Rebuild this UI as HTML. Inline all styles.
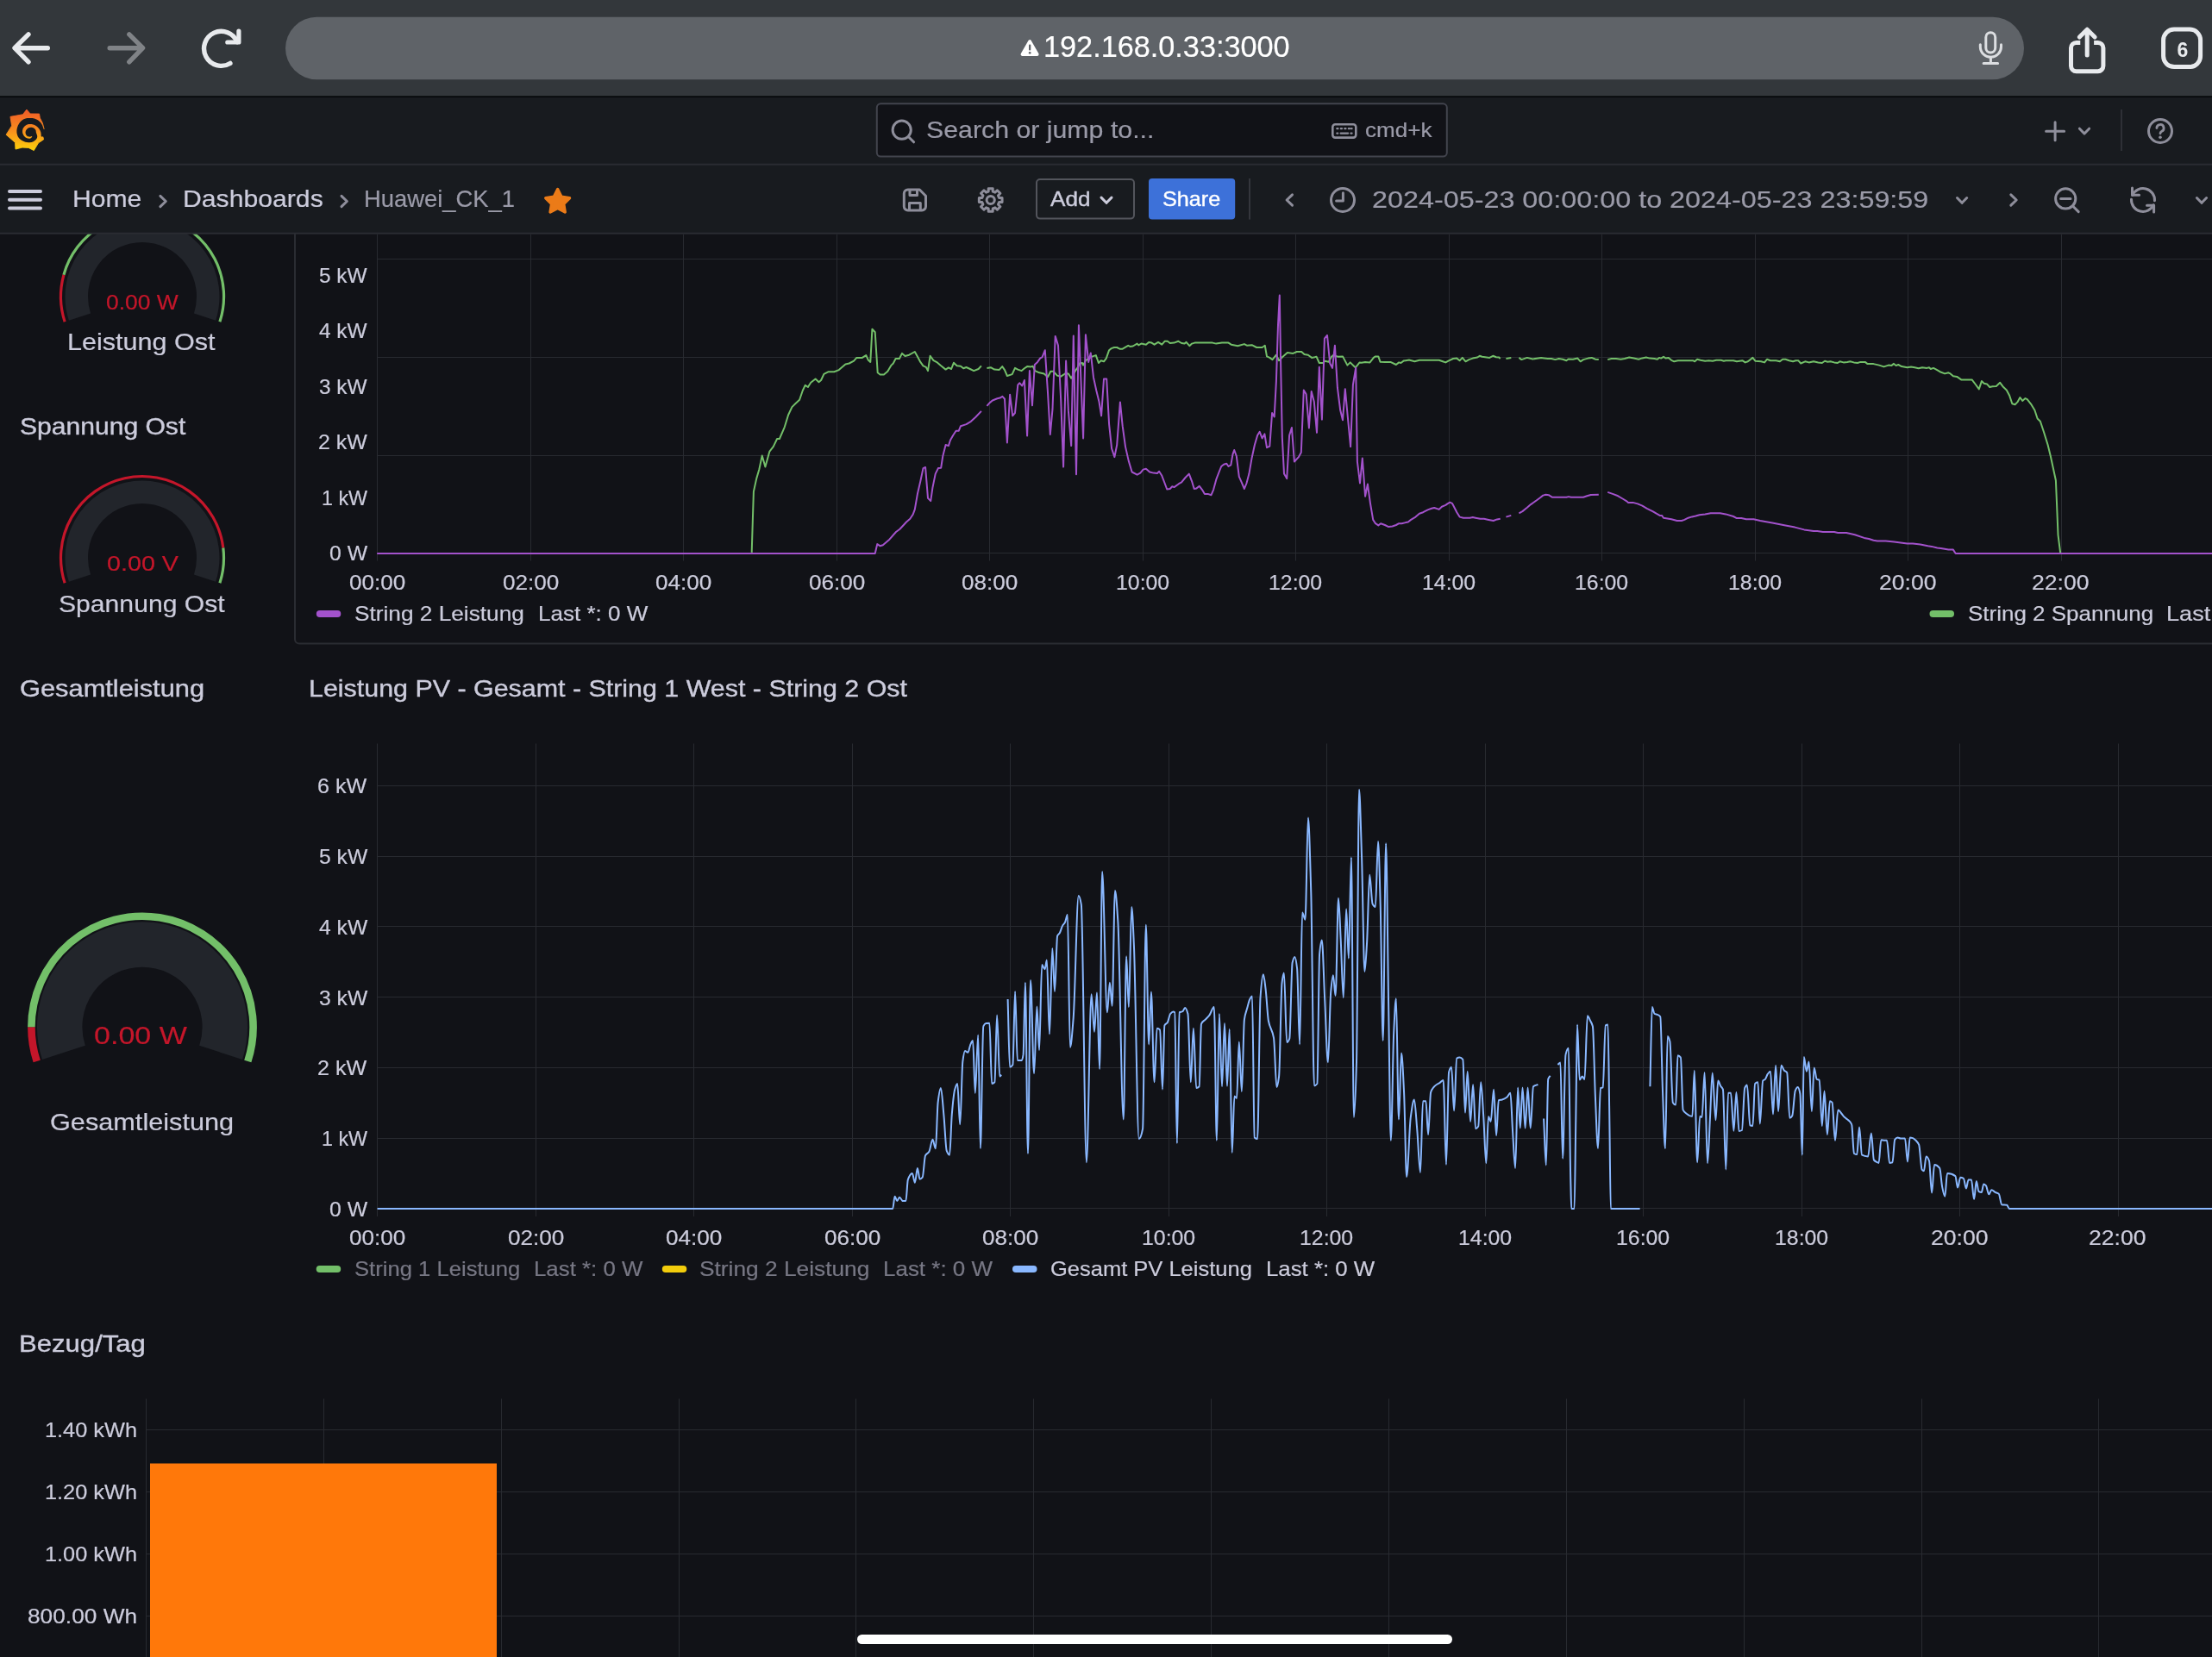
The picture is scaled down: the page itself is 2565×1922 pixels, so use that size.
<!DOCTYPE html>
<html><head><meta charset="utf-8"><title>Huawei_CK_1 - Dashboards - Grafana</title><style>
html,body{margin:0;padding:0;background:#111217;}
html{width:2565px;height:1922px;overflow:hidden;}
body{width:2565px;height:1922px;position:relative;overflow:hidden;font-family:"Liberation Sans", sans-serif;}
.r{position:absolute;}
.t{position:absolute;white-space:pre;line-height:normal;font-family:"Liberation Sans", sans-serif;transform-origin:0 0;}
#tx{position:absolute;left:0;top:0;width:2565px;height:1922px;will-change:transform;overflow:hidden;}
svg{position:absolute;left:0;top:0;overflow:hidden;}
</style></head><body>
<svg width="2565" height="1922" viewBox="0 0 2565 1922"><rect x="342" y="262" width="2240" height="484.5" rx="5" fill="none" stroke="#2a2c32" stroke-width="2"/>
<line x1="437.5" y1="272" x2="437.5" y2="650.5" stroke="#282a30" stroke-width="1"/>
<line x1="615.5" y1="272" x2="615.5" y2="650.5" stroke="#282a30" stroke-width="1"/>
<line x1="792.5" y1="272" x2="792.5" y2="650.5" stroke="#282a30" stroke-width="1"/>
<line x1="970.5" y1="272" x2="970.5" y2="650.5" stroke="#282a30" stroke-width="1"/>
<line x1="1147.5" y1="272" x2="1147.5" y2="650.5" stroke="#282a30" stroke-width="1"/>
<line x1="1325.5" y1="272" x2="1325.5" y2="650.5" stroke="#282a30" stroke-width="1"/>
<line x1="1502.5" y1="272" x2="1502.5" y2="650.5" stroke="#282a30" stroke-width="1"/>
<line x1="1680.5" y1="272" x2="1680.5" y2="650.5" stroke="#282a30" stroke-width="1"/>
<line x1="1857.5" y1="272" x2="1857.5" y2="650.5" stroke="#282a30" stroke-width="1"/>
<line x1="2035.5" y1="272" x2="2035.5" y2="650.5" stroke="#282a30" stroke-width="1"/>
<line x1="2212.5" y1="272" x2="2212.5" y2="650.5" stroke="#282a30" stroke-width="1"/>
<line x1="2390.5" y1="272" x2="2390.5" y2="650.5" stroke="#282a30" stroke-width="1"/>
<line x1="437.5" y1="300.5" x2="2565" y2="300.5" stroke="#282a30" stroke-width="1"/>
<line x1="437.5" y1="414.5" x2="2565" y2="414.5" stroke="#282a30" stroke-width="1"/>
<line x1="437.5" y1="528.5" x2="2565" y2="528.5" stroke="#282a30" stroke-width="1"/>
<line x1="437.5" y1="641.5" x2="2565" y2="641.5" stroke="#282a30" stroke-width="1"/>
<line x1="437.5" y1="862.5" x2="437.5" y2="1411" stroke="#282a30" stroke-width="1"/>
<line x1="621.5" y1="862.5" x2="621.5" y2="1411" stroke="#282a30" stroke-width="1"/>
<line x1="804.5" y1="862.5" x2="804.5" y2="1411" stroke="#282a30" stroke-width="1"/>
<line x1="988.5" y1="862.5" x2="988.5" y2="1411" stroke="#282a30" stroke-width="1"/>
<line x1="1171.5" y1="862.5" x2="1171.5" y2="1411" stroke="#282a30" stroke-width="1"/>
<line x1="1355.5" y1="862.5" x2="1355.5" y2="1411" stroke="#282a30" stroke-width="1"/>
<line x1="1538.5" y1="862.5" x2="1538.5" y2="1411" stroke="#282a30" stroke-width="1"/>
<line x1="1722.5" y1="862.5" x2="1722.5" y2="1411" stroke="#282a30" stroke-width="1"/>
<line x1="1905.5" y1="862.5" x2="1905.5" y2="1411" stroke="#282a30" stroke-width="1"/>
<line x1="2089.5" y1="862.5" x2="2089.5" y2="1411" stroke="#282a30" stroke-width="1"/>
<line x1="2272.5" y1="862.5" x2="2272.5" y2="1411" stroke="#282a30" stroke-width="1"/>
<line x1="2456.5" y1="862.5" x2="2456.5" y2="1411" stroke="#282a30" stroke-width="1"/>
<line x1="437.6" y1="1401.50" x2="2565" y2="1401.50" stroke="#282a30" stroke-width="1"/>
<line x1="437.6" y1="1320.50" x2="2565" y2="1320.50" stroke="#282a30" stroke-width="1"/>
<line x1="437.6" y1="1238.50" x2="2565" y2="1238.50" stroke="#282a30" stroke-width="1"/>
<line x1="437.6" y1="1156.50" x2="2565" y2="1156.50" stroke="#282a30" stroke-width="1"/>
<line x1="437.6" y1="1074.50" x2="2565" y2="1074.50" stroke="#282a30" stroke-width="1"/>
<line x1="437.6" y1="993.50" x2="2565" y2="993.50" stroke="#282a30" stroke-width="1"/>
<line x1="437.6" y1="911.50" x2="2565" y2="911.50" stroke="#282a30" stroke-width="1"/>
<line x1="169.5" y1="1622.5" x2="169.5" y2="1922" stroke="#282a30" stroke-width="1"/>
<line x1="375.5" y1="1622.5" x2="375.5" y2="1922" stroke="#282a30" stroke-width="1"/>
<line x1="581.5" y1="1622.5" x2="581.5" y2="1922" stroke="#282a30" stroke-width="1"/>
<line x1="787.5" y1="1622.5" x2="787.5" y2="1922" stroke="#282a30" stroke-width="1"/>
<line x1="992.5" y1="1622.5" x2="992.5" y2="1922" stroke="#282a30" stroke-width="1"/>
<line x1="1198.5" y1="1622.5" x2="1198.5" y2="1922" stroke="#282a30" stroke-width="1"/>
<line x1="1404.5" y1="1622.5" x2="1404.5" y2="1922" stroke="#282a30" stroke-width="1"/>
<line x1="1610.5" y1="1622.5" x2="1610.5" y2="1922" stroke="#282a30" stroke-width="1"/>
<line x1="1816.5" y1="1622.5" x2="1816.5" y2="1922" stroke="#282a30" stroke-width="1"/>
<line x1="2022.5" y1="1622.5" x2="2022.5" y2="1922" stroke="#282a30" stroke-width="1"/>
<line x1="2228.5" y1="1622.5" x2="2228.5" y2="1922" stroke="#282a30" stroke-width="1"/>
<line x1="2433.5" y1="1622.5" x2="2433.5" y2="1922" stroke="#282a30" stroke-width="1"/>
<line x1="169.5" y1="1658.5" x2="2565" y2="1658.5" stroke="#282a30" stroke-width="1"/>
<line x1="169.5" y1="1730.5" x2="2565" y2="1730.5" stroke="#282a30" stroke-width="1"/>
<line x1="169.5" y1="1802.5" x2="2565" y2="1802.5" stroke="#282a30" stroke-width="1"/>
<line x1="169.5" y1="1874.5" x2="2565" y2="1874.5" stroke="#282a30" stroke-width="1"/>
<rect x="174" y="1697.5" width="402" height="224.5" fill="#ff780a"/>
<path d="M871.7 640.9L872.8 605.0L873.9 570.3L877.2 555.1L880.4 544.2L883.7 528.6L887.4 541.6L892.4 523.6L896.7 518.1L901.1 509.0L903.9 509.0L909.8 495.3L914.1 481.2L918.4 472.1L922.8 467.7L927.1 463.8L930.8 453.0L933.7 446.9L936.9 449.0L940.2 443.8L945.6 439.5L949.5 443.2L952.1 441.0L955.4 433.8L960.8 431.2L967.3 431.2L972.8 429.1L980.4 422.5L984.7 421.5L990.1 418.6L993.4 414.9L999.9 414.9L1004.3 412.1L1006.9 417.8L1009.3 419.9L1011.4 381.7L1014.7 385.2L1017.7 432.3L1020.6 434.5L1024.9 434.5L1029.3 430.8L1033.6 423.6L1035.8 421.5L1038.6 416.0L1042.9 416.0L1046.0 409.9L1049.5 413.0L1054.2 411.7L1060.8 408.0L1064.0 413.8L1067.3 419.9L1070.5 424.3L1073.8 425.8L1076.0 430.1L1078.6 412.8L1082.5 418.2L1086.8 420.4L1091.2 424.3L1096.6 428.6L1099.9 426.4L1103.1 428.0L1105.9 420.8L1109.6 424.3L1114.0 424.7L1117.2 427.3L1120.5 426.0L1124.9 428.0L1129.2 430.1L1134.6 428.0L1137.9 424.3" fill="none" stroke="#73bf69" stroke-width="2" stroke-linejoin="round" stroke-linecap="butt"/>
<path d="M1144.4 426.9L1148.8 426.2L1153.1 428.6L1158.5 429.1L1162.2 425.1L1165.0 429.1L1167.9 436.0L1173.7 434.1L1177.0 426.9L1180.3 428.6L1184.6 430.1L1187.9 427.3L1191.1 425.1L1195.5 425.4L1197.6 424.7L1200.2 430.1L1205.2 432.3L1210.7 433.4L1215.0 437.3L1218.3 430.8L1221.5 430.8L1225.9 435.6L1230.2 436.7L1235.7 433.0L1238.9 433.4L1242.2 438.8L1247.6 429.1L1250.0 425.8L1251.7 421.5L1255.0 421.0L1256.1 423.6L1259.3 417.8L1262.6 415.6L1266.9 413.4L1270.8 412.1L1273.9 421.0L1276.7 418.2L1280.0 419.3L1282.8 415.6L1286.1 406.2L1288.7 404.1L1291.9 403.0L1295.2 403.0L1298.4 404.7L1301.7 404.7L1308.2 400.8L1310.4 401.9L1313.7 401.5L1318.6 398.6L1320.2 400.4L1323.4 398.6L1328.9 399.7L1332.1 396.9L1335.4 397.6L1338.6 399.7L1343.0 396.9L1347.3 399.7L1350.6 395.8L1353.8 395.8L1356.7 398.0L1361.5 397.6L1366.4 395.8L1370.1 398.0L1373.4 398.6L1375.6 396.9L1379.3 401.2L1382.1 398.6L1385.4 397.6L1395.1 397.6L1406.0 397.6L1410.3 398.6L1416.9 397.6L1424.5 397.6L1427.7 399.7L1435.3 401.2L1442.9 399.1L1446.2 400.8L1451.6 400.2L1457.1 403.0L1463.6 403.0L1466.8 400.8L1469.0 413.4L1472.3 414.9L1475.5 417.1L1479.9 411.7L1483.1 418.2L1487.5 413.8L1492.9 409.1L1499.4 409.9L1503.8 408.0L1509.2 408.0L1512.5 411.0L1516.8 411.7L1521.1 414.9L1526.6 413.8L1529.8 421.0L1534.2 421.0L1536.4 418.8L1540.7 419.7L1544.0 413.8L1546.1 412.1L1551.6 413.8L1557.0 413.4L1562.4 423.6L1565.7 420.4L1571.1 425.8L1572.2 425.8L1576.6 420.4L1578.7 420.8L1583.1 419.9L1588.5 420.4L1592.8 414.9L1595.0 413.4L1598.3 413.4L1600.5 419.7L1605.9 419.9L1612.4 419.9L1618.9 423.0L1622.2 420.4L1624.4 421.0L1627.6 418.6L1630.0 418.2L1633.9 417.5L1640.4 419.3L1645.9 417.8L1668.7 417.8L1673.0 419.3L1676.3 420.4L1679.5 418.6L1685.0 416.0L1689.3 415.6L1692.6 418.2L1695.8 414.9L1699.5 419.3L1703.4 417.1L1707.8 415.6L1713.2 414.5L1715.8 412.8L1718.6 413.8L1727.3 414.9L1731.2 412.8L1734.9 414.3L1738.2 414.5L1739.7 416.0" fill="none" stroke="#73bf69" stroke-width="2" stroke-linejoin="round" stroke-linecap="butt"/>
<path d="M1746.4 416.0L1752.3 414.9" fill="none" stroke="#73bf69" stroke-width="2" stroke-linejoin="round" stroke-linecap="butt"/>
<path d="M1761.4 414.9L1764.3 417.1L1770.8 414.9L1777.3 416.5L1783.8 415.4L1787.1 414.9L1790.3 415.4L1794.7 416.0L1799.0 416.0L1803.4 417.1L1807.7 416.0L1812.1 416.7L1816.4 418.2L1818.6 416.5L1824.0 416.7L1829.4 415.6L1832.7 419.3L1836.0 417.1L1841.4 415.6L1845.7 414.9L1850.1 416.7L1853.8 417.1" fill="none" stroke="#73bf69" stroke-width="2" stroke-linejoin="round" stroke-linecap="butt"/>
<path d="M1864.2 417.1L1868.6 416.0L1874.0 416.0L1879.4 416.7L1883.8 416.0L1889.2 414.5L1894.6 415.6L1900.1 416.7L1904.4 415.4L1908.8 414.5L1913.1 415.6L1918.5 416.0L1921.8 416.7L1924.0 414.9L1926.1 415.6L1929.0 413.8L1931.6 415.6L1934.8 414.9L1938.1 417.8L1941.3 419.3L1945.7 418.2L1957.6 418.2L1963.1 418.2L1965.2 419.3L1968.1 416.7L1971.8 417.8L1977.2 418.8L1981.5 418.2L1985.9 418.8L1990.2 417.8L1995.7 417.8L1998.9 418.8L2001.1 418.2L2010.0 418.2L2013.9 419.3L2020.4 418.2L2023.7 420.4L2026.9 419.3L2032.4 414.9L2035.6 418.8L2042.1 419.3L2046.1 420.4L2049.1 416.7L2053.0 418.2L2059.5 418.2L2063.9 419.3L2067.1 416.7L2070.4 416.7L2074.7 418.2L2079.1 419.3L2082.3 418.2L2085.2 418.2L2088.2 421.5L2093.2 419.3L2097.6 420.4L2103.0 419.3L2108.4 420.4L2112.8 421.0L2116.0 418.8L2119.3 419.7L2122.5 419.3L2126.9 420.4L2130.8 421.0L2133.4 419.3L2137.7 420.4L2142.1 419.9L2145.4 419.3L2149.7 420.4L2154.0 421.0L2157.3 419.9L2162.7 419.9L2165.6 422.1L2172.5 422.1L2179.0 423.6L2184.5 425.4L2189.9 423.6L2193.2 424.1L2196.0 421.9L2198.6 424.1L2201.2 423.0L2205.1 425.1L2211.6 426.2L2216.0 425.4L2220.3 426.2L2224.7 427.3L2229.0 426.2L2234.4 426.9L2237.0 426.2L2238.8 428.0L2242.0 426.9L2245.3 428.6L2249.6 431.2L2255.1 433.4L2259.4 432.3L2261.6 433.4L2264.9 436.2L2269.2 436.9L2274.2 440.4L2286.6 440.4L2290.9 446.0L2294.8 451.4L2297.9 442.1L2300.7 444.7L2304.0 445.4L2307.2 449.0L2310.5 448.2L2314.8 448.0L2319.2 443.8L2322.4 448.2L2326.8 452.5L2330.0 458.4L2333.3 468.2L2336.6 469.3L2339.4 466.4L2342.4 461.0L2345.2 464.9L2348.5 462.1L2350.7 463.2L2355.0 468.6L2359.4 475.8L2362.6 485.5L2365.9 488.8L2370.2 501.8L2374.6 516.0L2377.8 529.0L2381.1 544.2L2383.9 557.2L2385.0 583.3L2386.5 620.3L2388.7 637.6L2389.3 642.0" fill="none" stroke="#73bf69" stroke-width="2" stroke-linejoin="round" stroke-linecap="butt"/>
<path d="M437.2 642.0L1014.7 642.0L1017.3 631.1L1020.6 633.3L1023.8 632.2L1031.4 625.7L1039.0 617.0L1043.4 613.7L1051.0 605.5L1055.3 601.8L1058.6 596.8L1060.8 590.9L1064.0 572.5L1067.3 558.3L1070.5 543.1L1073.1 542.0L1076.0 577.9L1079.2 581.1L1081.4 565.9L1084.7 549.6L1087.9 543.1L1091.2 542.7L1093.3 529.0L1096.6 516.0L1099.9 517.1L1102.0 510.5L1105.3 504.7L1108.6 499.7L1111.8 499.7L1114.0 494.2L1120.5 492.1L1125.9 488.8L1131.4 483.8L1137.9 476.9" fill="none" stroke="#a352cc" stroke-width="2" stroke-linejoin="round" stroke-linecap="butt"/>
<path d="M1144.4 470.8L1147.7 467.1L1150.9 464.5L1156.4 462.3L1159.6 461.6L1162.4 459.9L1165.0 462.7L1167.9 513.4L1171.1 457.7L1174.2 482.3L1177.0 479.0L1180.3 446.4L1182.4 444.3L1185.3 447.5L1187.9 441.0L1191.1 505.5L1193.9 430.1L1197.0 470.3L1199.8 423.0L1203.1 419.9L1206.3 415.4L1208.5 414.3L1211.8 406.2L1215.0 455.1L1217.8 504.0L1220.5 474.7L1223.7 389.9L1227.0 400.8L1230.2 463.8L1233.1 541.6L1236.1 418.6L1238.9 476.9L1242.2 517.1L1244.8 389.5L1248.0 550.3L1250.9 377.3L1253.5 442.1L1256.1 508.4L1258.9 388.2L1262.2 419.9L1264.8 409.5L1268.0 437.7L1271.3 453.0L1274.5 466.0L1277.1 482.3L1280.0 439.5L1283.2 439.5L1286.1 492.1L1289.1 520.3L1292.4 530.1L1295.2 516.0L1298.9 466.4L1301.7 494.2L1305.0 518.1L1308.7 534.4L1312.6 547.5L1318.6 550.7L1322.3 548.6L1325.6 544.6L1328.9 543.8L1333.2 547.5L1337.6 548.6L1341.9 549.0L1344.1 546.8L1347.3 551.8L1350.6 560.5L1353.2 567.5L1356.7 567.0L1359.3 564.2L1361.5 565.1L1366.9 561.2L1370.1 559.4L1374.5 554.0L1378.8 549.6L1382.1 558.3L1384.7 567.0L1387.5 566.4L1390.8 563.8L1394.0 568.1L1396.9 572.9L1400.6 572.9L1404.5 574.2L1407.1 568.1L1410.3 556.2L1413.6 547.5L1416.2 541.0L1419.0 538.8L1422.3 537.7L1424.5 541.0L1427.3 539.4L1429.5 526.8L1431.2 522.0L1433.8 529.0L1436.8 552.9L1439.7 559.4L1442.9 567.0L1445.5 560.5L1448.4 549.6L1451.6 531.2L1454.9 516.0L1458.1 505.1L1460.7 500.8L1463.6 508.4L1466.4 503.4L1469.0 519.2L1472.3 517.7L1475.1 479.0L1477.7 483.4L1479.9 442.1L1482.0 376.9L1483.8 342.6L1485.3 431.2L1486.8 507.3L1489.0 549.6L1492.2 555.1L1495.1 505.1L1497.9 496.0L1500.9 535.5L1505.9 530.1L1508.8 524.7L1511.8 452.5L1514.6 457.3L1517.9 496.4L1520.7 454.0L1523.8 466.0L1527.0 501.8L1529.8 425.8L1532.9 486.6L1535.9 392.6L1539.0 388.9L1542.2 421.5L1545.0 426.9L1547.9 400.8L1550.9 449.7L1554.2 475.8L1557.0 487.3L1559.8 451.2L1562.9 484.5L1566.1 518.1L1568.9 446.4L1572.2 426.4L1573.9 535.5L1577.0 560.5L1579.8 531.6L1583.1 575.7L1585.9 561.6L1588.9 583.3L1592.2 602.9L1595.0 607.2L1598.3 609.4L1601.1 607.2L1605.9 609.0L1610.2 611.1L1614.6 610.5L1618.9 609.0L1622.2 607.2L1625.4 607.2L1630.0 606.1L1632.8 605.5L1636.1 602.9L1641.5 599.6L1645.9 595.7L1650.2 594.2L1655.6 591.4L1660.0 589.8L1663.2 589.0L1668.7 590.9L1671.9 587.7L1676.3 585.9L1678.4 584.4L1681.3 582.7L1683.9 583.8L1686.0 587.7L1689.3 594.2L1692.6 599.6L1696.9 600.7L1704.5 600.7L1707.8 600.0L1711.0 600.7L1716.5 601.8L1720.8 601.8L1726.2 602.9L1731.7 604.0L1736.0 602.4L1739.7 601.8" fill="none" stroke="#a352cc" stroke-width="2" stroke-linejoin="round" stroke-linecap="butt"/>
<path d="M1746.4 599.6L1752.3 597.9" fill="none" stroke="#a352cc" stroke-width="2" stroke-linejoin="round" stroke-linecap="butt"/>
<path d="M1761.4 595.3L1765.4 593.1L1770.8 588.8L1775.1 585.1L1781.6 580.5L1786.0 577.2L1789.3 574.6L1792.5 573.8L1795.8 574.2L1800.1 576.8L1816.4 576.8L1819.0 576.1L1821.8 576.8L1836.0 576.8L1840.3 575.3L1844.7 574.0L1853.8 573.8" fill="none" stroke="#a352cc" stroke-width="2" stroke-linejoin="round" stroke-linecap="butt"/>
<path d="M1864.2 570.9L1870.7 573.1L1876.2 575.3L1881.6 578.5L1885.9 581.1L1888.1 582.9L1893.5 582.9L1899.0 584.4L1904.4 586.6L1909.8 589.8L1916.4 593.1L1920.7 595.7L1924.6 597.9L1927.2 598.1L1929.0 600.7L1933.7 601.4L1938.1 602.2L1944.6 604.0L1950.0 604.0L1953.3 602.9L1957.6 600.7L1962.0 599.4L1966.3 598.5L1970.7 597.2L1977.2 596.4L1983.7 595.3L1994.6 595.3L2001.1 596.4L2010.0 599.0L2013.9 601.1L2019.3 601.1L2024.8 602.2L2033.5 602.2L2041.1 604.0L2055.2 606.6L2070.4 609.4L2081.3 611.6L2092.1 614.4L2103.0 615.9L2107.3 615.9L2113.8 617.0L2126.9 617.0L2131.2 617.9L2141.0 618.1L2150.8 620.3L2161.6 623.9L2167.1 625.0L2172.5 626.8L2176.9 627.4L2186.6 627.4L2196.4 628.5L2211.6 630.5L2218.1 630.5L2226.8 631.6L2235.5 633.3L2239.9 633.9L2246.4 635.5L2250.7 635.9L2259.4 637.6L2264.9 637.6L2267.7 642.0L2576.6 642.0" fill="none" stroke="#a352cc" stroke-width="2" stroke-linejoin="round" stroke-linecap="butt"/>
<path d="M437.6 1401.9C636.8 1401.9 836.0 1401.9 1035.2 1401.9C1036.0 1401.9 1036.8 1387.7 1037.6 1387.7C1038.5 1387.7 1039.4 1393.1 1040.3 1393.1C1041.2 1393.1 1042.1 1388.7 1043.0 1388.7C1044.3 1388.7 1045.7 1393.1 1047.0 1393.1C1048.2 1393.1 1049.3 1393.1 1050.4 1393.1C1051.2 1393.1 1052.0 1370.7 1052.8 1368.4C1054.5 1363.7 1056.1 1361.0 1057.8 1361.0C1058.9 1361.0 1059.9 1371.8 1060.9 1371.8C1061.9 1371.8 1062.9 1354.9 1063.9 1354.9C1064.8 1354.9 1065.7 1367.8 1066.6 1367.8C1067.6 1367.8 1068.6 1367.0 1069.7 1365.7C1070.8 1364.4 1071.9 1342.6 1073.0 1340.4C1074.5 1337.6 1076.0 1338.1 1077.4 1335.7C1078.8 1333.4 1080.1 1321.8 1081.5 1321.8C1082.6 1321.8 1083.7 1332.3 1084.9 1332.3C1085.8 1332.3 1086.7 1286.3 1087.6 1278.9C1088.7 1269.7 1089.8 1262.0 1090.9 1262.0C1092.1 1262.0 1093.2 1280.6 1094.3 1292.4C1095.5 1304.2 1096.6 1331.6 1097.7 1334.7C1098.8 1337.7 1100.0 1339.7 1101.1 1339.7C1102.0 1339.7 1102.9 1302.9 1103.8 1292.4C1104.9 1279.4 1106.0 1267.6 1107.2 1263.7C1108.2 1260.2 1109.2 1257.0 1110.2 1257.0C1111.2 1257.0 1112.2 1304.3 1113.2 1304.3C1114.3 1304.3 1115.3 1239.4 1116.3 1231.6C1117.2 1224.7 1118.1 1219.1 1119.0 1219.1C1120.1 1219.1 1121.2 1220.8 1122.4 1220.8C1123.4 1220.8 1124.4 1213.5 1125.4 1211.4C1126.3 1209.4 1127.2 1207.0 1128.1 1207.0C1129.0 1207.0 1129.9 1267.8 1130.8 1267.8C1131.9 1267.8 1133.1 1200.5 1134.2 1200.5C1135.1 1200.5 1136.0 1332.0 1136.9 1332.0C1138.0 1332.0 1139.1 1192.8 1140.3 1190.4C1141.3 1188.2 1142.3 1187.2 1143.3 1187.0C1144.7 1186.8 1146.0 1186.7 1147.4 1186.7C1148.3 1186.7 1149.2 1257.0 1150.1 1257.0C1151.2 1257.0 1152.3 1256.4 1153.4 1255.3C1154.3 1254.4 1155.2 1177.6 1156.1 1177.6C1157.2 1177.6 1158.2 1248.5 1159.2 1248.5C1159.9 1248.5 1160.5 1247.4 1161.2 1246.8" fill="none" stroke="#8ab8ff" stroke-width="2" stroke-linejoin="round" stroke-linecap="butt"/>
<path d="M1168.6 1159.0C1169.4 1185.2 1170.2 1237.7 1171.0 1237.7C1172.1 1237.7 1173.3 1236.8 1174.4 1235.0C1175.3 1233.5 1176.2 1149.9 1177.1 1149.9C1178.0 1149.9 1178.9 1229.9 1179.8 1229.9C1181.5 1229.9 1183.2 1229.9 1184.9 1229.9C1185.4 1229.9 1186.0 1227.1 1186.6 1223.2C1187.3 1217.8 1188.1 1139.7 1188.9 1139.7C1189.9 1139.7 1190.9 1338.0 1192.0 1338.0C1193.0 1338.0 1194.0 1137.0 1195.0 1137.0C1196.4 1137.0 1197.7 1245.1 1199.1 1245.1C1200.2 1245.1 1201.3 1167.4 1202.4 1167.4C1203.3 1167.4 1204.2 1218.1 1205.1 1218.1C1206.1 1218.1 1207.2 1119.1 1208.2 1119.1C1209.3 1119.1 1210.4 1124.2 1211.6 1124.2C1212.3 1124.2 1213.1 1113.4 1213.9 1113.4C1214.9 1113.4 1215.9 1199.5 1217.0 1199.5C1218.1 1199.5 1219.2 1099.9 1220.3 1099.9C1221.2 1099.9 1222.1 1149.9 1223.0 1149.9C1224.1 1149.9 1225.1 1088.0 1226.1 1085.7C1227.0 1083.6 1227.9 1083.8 1228.8 1082.3C1229.9 1080.4 1231.0 1075.4 1232.2 1073.5C1233.1 1072.0 1234.0 1071.7 1234.9 1070.1C1235.9 1068.4 1236.9 1061.0 1237.9 1061.0C1238.9 1061.0 1239.9 1214.7 1240.9 1214.7C1242.2 1214.7 1243.4 1196.6 1244.7 1180.9C1246.7 1155.3 1248.7 1039.1 1250.7 1039.1C1251.8 1039.1 1252.8 1043.4 1253.8 1049.2C1255.8 1060.7 1257.8 1348.2 1259.9 1348.2C1261.8 1348.2 1263.7 1153.2 1265.6 1153.2C1266.7 1153.2 1267.9 1196.8 1269.0 1196.8C1270.0 1196.8 1271.0 1151.2 1272.0 1151.2C1273.0 1151.2 1274.1 1240.1 1275.1 1240.1C1276.1 1240.1 1277.1 1011.0 1278.1 1011.0C1280.0 1011.0 1281.9 1174.2 1283.9 1174.2C1284.9 1174.2 1285.9 1139.7 1286.9 1139.7C1287.8 1139.7 1288.7 1166.8 1289.6 1166.8C1290.7 1166.8 1291.8 1033.0 1293.0 1033.0C1294.1 1033.0 1295.2 1051.8 1296.4 1069.5C1298.5 1103.1 1300.6 1298.5 1302.8 1298.5C1303.9 1298.5 1305.0 1109.3 1306.1 1109.3C1307.0 1109.3 1308.0 1168.1 1308.9 1168.1C1310.0 1168.1 1311.1 1051.9 1312.2 1051.9C1313.1 1051.9 1314.0 1076.5 1314.9 1096.5C1316.8 1138.9 1318.8 1321.1 1320.7 1321.1C1322.1 1321.1 1323.6 1317.1 1325.1 1309.3C1326.3 1302.8 1327.5 1072.8 1328.8 1072.8C1329.9 1072.8 1331.0 1211.4 1332.2 1211.4C1333.1 1211.4 1334.0 1150.5 1334.9 1150.5C1336.1 1150.5 1337.3 1255.3 1338.6 1255.3C1339.6 1255.3 1340.6 1192.8 1341.6 1192.8C1342.7 1192.8 1343.9 1193.3 1345.0 1194.5C1346.0 1195.5 1347.0 1263.7 1348.0 1263.7C1348.8 1263.7 1349.6 1191.0 1350.4 1189.4C1351.5 1187.1 1352.7 1187.7 1353.8 1186.0C1354.9 1184.3 1356.0 1177.2 1357.2 1175.9C1358.3 1174.6 1359.4 1173.5 1360.5 1173.5C1361.1 1173.5 1361.7 1173.8 1362.2 1174.2C1363.1 1174.9 1364.0 1326.2 1364.9 1326.2C1365.8 1326.2 1366.7 1174.7 1367.6 1174.2C1368.9 1173.5 1370.1 1173.8 1371.4 1173.2C1372.3 1172.7 1373.2 1169.1 1374.1 1169.1C1375.2 1169.1 1376.3 1171.7 1377.4 1175.9C1378.6 1180.0 1379.7 1255.3 1380.8 1255.3C1381.8 1255.3 1382.8 1192.8 1383.9 1192.8C1385.0 1192.8 1386.1 1262.0 1387.2 1262.0C1388.4 1262.0 1389.5 1261.5 1390.6 1260.3C1391.4 1259.5 1392.2 1189.5 1393.0 1187.7C1394.5 1184.1 1396.1 1184.3 1397.7 1182.6C1399.3 1180.9 1400.9 1179.7 1402.4 1177.6C1404.2 1175.2 1406.0 1168.1 1407.8 1168.1C1408.9 1168.1 1409.9 1322.8 1410.9 1322.8C1411.9 1322.8 1412.9 1175.9 1413.9 1175.9C1414.9 1175.9 1415.9 1260.3 1417.0 1260.3C1418.0 1260.3 1419.0 1187.0 1420.0 1187.0C1421.0 1187.0 1422.0 1259.7 1423.0 1259.7C1423.9 1259.7 1424.8 1193.8 1425.7 1193.8C1426.7 1193.8 1427.7 1337.0 1428.7 1337.0C1429.6 1337.0 1430.5 1271.5 1431.4 1271.5C1432.3 1271.5 1433.2 1273.9 1434.1 1273.9C1435.0 1273.9 1435.9 1208.6 1436.8 1208.6C1437.8 1208.6 1438.9 1266.1 1439.9 1266.1C1440.9 1266.1 1441.9 1189.8 1442.9 1182.6C1444.0 1174.7 1445.2 1173.2 1446.3 1169.1C1447.3 1165.4 1448.3 1160.8 1449.3 1159.0C1450.2 1157.4 1451.1 1155.6 1452.0 1155.6C1452.9 1155.6 1453.8 1318.5 1454.7 1319.5C1455.9 1320.6 1457.0 1321.1 1458.1 1321.1C1459.2 1321.1 1460.4 1172.8 1461.5 1157.3C1462.6 1141.8 1463.7 1130.3 1464.9 1130.3C1465.8 1130.3 1466.7 1140.1 1467.6 1147.2C1468.7 1156.0 1469.8 1178.4 1470.9 1184.3C1473.0 1195.0 1475.0 1192.2 1477.0 1203.9C1478.2 1210.4 1479.3 1261.0 1480.4 1261.0C1481.3 1261.0 1482.2 1255.6 1483.1 1248.5C1484.2 1239.7 1485.4 1149.7 1486.5 1140.4C1487.3 1133.9 1488.1 1128.6 1488.9 1128.6C1490.0 1128.6 1491.1 1209.0 1492.2 1209.0C1493.2 1209.0 1494.3 1207.3 1495.3 1204.6C1496.4 1201.6 1497.5 1121.7 1498.6 1116.8C1499.5 1112.8 1500.5 1110.0 1501.4 1110.0C1502.3 1110.0 1503.2 1115.9 1504.1 1123.5C1505.1 1132.0 1506.1 1211.4 1507.1 1211.4C1508.1 1211.4 1509.1 1058.6 1510.1 1058.6C1511.3 1058.6 1512.4 1066.8 1513.5 1066.8C1514.6 1066.8 1515.8 948.5 1516.9 948.5C1518.0 948.5 1519.1 995.3 1520.3 1035.7C1521.5 1080.1 1522.7 1259.3 1524.0 1259.3C1525.1 1259.3 1526.2 1258.6 1527.4 1257.0C1528.3 1255.7 1529.2 1116.4 1530.1 1106.6C1531.0 1096.9 1531.9 1090.4 1532.8 1090.4C1533.9 1090.4 1535.0 1134.8 1536.1 1157.3C1537.4 1182.1 1538.6 1232.3 1539.9 1232.3C1541.0 1232.3 1542.1 1162.7 1543.2 1150.5C1544.1 1140.8 1545.0 1131.3 1545.9 1131.3C1546.8 1131.3 1547.7 1154.9 1548.6 1154.9C1549.8 1154.9 1550.9 1041.8 1552.0 1041.8C1552.9 1041.8 1553.8 1072.0 1554.7 1089.7C1555.7 1109.7 1556.8 1157.3 1557.8 1157.3C1558.9 1157.3 1560.0 1054.3 1561.1 1054.3C1562.0 1054.3 1563.0 1111.7 1563.9 1111.7C1564.9 1111.7 1565.9 994.5 1566.9 994.5C1567.9 994.5 1568.9 1295.8 1569.9 1295.8C1570.9 1295.8 1572.0 1267.2 1573.0 1231.6C1574.0 1196.1 1575.0 915.7 1576.0 915.7C1577.0 915.7 1578.0 963.5 1579.1 995.1C1580.2 1030.2 1581.3 1126.9 1582.4 1126.9C1583.3 1126.9 1584.2 1108.2 1585.1 1093.1C1586.1 1076.2 1587.2 1014.7 1588.2 1014.7C1589.3 1014.7 1590.4 1046.5 1591.6 1048.5C1592.7 1050.6 1593.8 1051.9 1594.9 1051.9C1595.9 1051.9 1597.0 975.9 1598.0 975.9C1598.9 975.9 1599.8 1017.3 1600.7 1049.2C1601.7 1085.1 1602.7 1207.0 1603.7 1207.0C1604.8 1207.0 1606.0 978.2 1607.1 978.2C1608.1 978.2 1609.1 1103.4 1610.1 1164.1C1611.0 1218.0 1611.9 1322.8 1612.8 1322.8C1614.0 1322.8 1615.1 1221.1 1616.2 1197.8C1617.1 1179.3 1618.0 1158.3 1618.9 1158.3C1619.9 1158.3 1620.9 1298.5 1622.0 1298.5C1623.0 1298.5 1624.0 1221.5 1625.0 1221.5C1626.0 1221.5 1627.0 1245.1 1628.0 1265.4C1629.1 1285.7 1630.1 1365.1 1631.1 1365.1C1632.7 1365.1 1634.2 1307.4 1635.8 1295.8C1637.2 1285.9 1638.5 1275.5 1639.9 1275.5C1641.0 1275.5 1642.1 1296.4 1643.2 1309.3C1644.5 1323.6 1645.7 1360.0 1647.0 1360.0C1648.0 1360.0 1649.0 1277.2 1650.0 1277.2C1651.1 1277.2 1652.3 1277.2 1653.4 1277.2C1654.3 1277.2 1655.2 1316.1 1656.1 1316.1C1657.1 1316.1 1658.1 1270.4 1659.1 1267.1C1660.2 1263.4 1661.4 1262.4 1662.5 1261.0C1663.6 1259.7 1664.8 1258.7 1665.9 1258.0C1667.1 1257.1 1668.4 1256.7 1669.6 1255.9C1670.9 1255.1 1672.3 1252.9 1673.6 1252.9C1674.8 1252.9 1675.9 1350.9 1677.0 1350.9C1678.0 1350.9 1679.1 1247.1 1680.1 1243.4C1681.1 1239.8 1682.1 1237.7 1683.1 1237.7C1684.1 1237.7 1685.1 1288.4 1686.1 1288.4C1687.2 1288.4 1688.2 1228.2 1689.2 1227.6C1690.3 1226.9 1691.4 1226.6 1692.6 1226.6C1693.8 1226.6 1695.0 1227.3 1696.3 1228.9C1697.2 1230.1 1698.1 1290.7 1699.0 1290.7C1699.9 1290.7 1700.8 1242.8 1701.7 1242.8C1702.8 1242.8 1703.9 1300.9 1705.1 1300.9C1706.1 1300.9 1707.1 1258.0 1708.1 1258.0C1709.1 1258.0 1710.1 1309.3 1711.1 1309.3C1712.2 1309.3 1713.2 1308.3 1714.2 1306.6C1715.2 1304.9 1716.2 1255.3 1717.2 1255.3C1718.2 1255.3 1719.3 1280.5 1720.3 1295.8C1721.3 1311.2 1722.3 1349.2 1723.3 1349.2C1724.2 1349.2 1725.1 1295.1 1726.0 1295.1C1726.9 1295.1 1727.8 1300.9 1728.7 1300.9C1729.8 1300.9 1731.0 1263.7 1732.1 1263.7C1733.1 1263.7 1734.1 1317.1 1735.1 1317.1C1736.0 1317.1 1736.9 1276.5 1737.8 1276.2C1739.2 1275.7 1740.5 1275.9 1741.9 1275.5C1743.7 1275.1 1745.5 1274.2 1747.3 1272.8C1748.6 1271.9 1750.0 1267.8 1751.4 1267.8C1752.3 1267.8 1753.2 1299.0 1754.1 1312.7C1755.1 1328.1 1756.1 1354.9 1757.1 1354.9C1758.1 1354.9 1759.1 1261.4 1760.1 1261.4C1761.0 1261.4 1761.9 1308.6 1762.8 1308.6C1763.7 1308.6 1764.6 1261.4 1765.5 1261.4C1766.6 1261.4 1767.6 1308.6 1768.6 1308.6C1769.6 1308.6 1770.6 1261.4 1771.6 1261.4C1772.6 1261.4 1773.6 1308.6 1774.7 1308.6C1775.8 1308.6 1776.9 1261.4 1778.0 1260.3C1779.8 1258.7 1781.6 1258.8 1783.4 1258.0" fill="none" stroke="#8ab8ff" stroke-width="2" stroke-linejoin="round" stroke-linecap="butt"/>
<path d="M1790.1 1297.5C1791.0 1315.5 1791.9 1351.6 1792.8 1351.6C1793.6 1351.6 1794.4 1254.5 1795.2 1251.9C1796.0 1249.3 1796.8 1249.2 1797.6 1247.8" fill="none" stroke="#8ab8ff" stroke-width="2" stroke-linejoin="round" stroke-linecap="butt"/>
<path d="M1806.4 1235.0C1807.4 1234.2 1808.4 1232.6 1809.4 1232.6C1810.3 1232.6 1811.2 1343.8 1812.1 1343.8C1813.2 1343.8 1814.3 1227.8 1815.5 1223.2C1816.6 1218.5 1817.7 1215.7 1818.9 1215.7C1819.6 1215.7 1820.4 1332.7 1821.2 1366.8C1821.6 1381.4 1821.9 1401.9 1822.2 1401.9C1823.4 1401.9 1824.5 1401.9 1825.6 1401.9C1826.2 1401.9 1826.7 1334.7 1827.3 1299.2C1827.9 1263.7 1828.4 1188.4 1829.0 1188.4C1829.9 1188.4 1830.8 1252.6 1831.7 1252.6C1832.7 1252.6 1833.7 1248.5 1834.7 1248.5C1835.6 1248.5 1836.5 1251.9 1837.4 1251.9C1838.6 1251.9 1839.7 1178.2 1840.8 1178.2C1841.9 1178.2 1843.1 1182.1 1844.2 1184.3C1845.1 1186.1 1846.0 1186.7 1846.9 1190.4C1847.9 1194.5 1848.9 1249.1 1849.9 1272.2C1850.9 1295.2 1852.0 1332.0 1853.0 1332.0C1854.0 1332.0 1855.0 1262.5 1856.0 1262.0C1856.9 1261.6 1857.8 1261.8 1858.7 1261.4C1859.7 1260.9 1860.7 1190.1 1861.8 1189.4C1862.7 1188.7 1863.6 1188.4 1864.5 1188.4C1865.0 1188.4 1865.6 1247.2 1866.1 1282.3C1866.7 1317.4 1867.3 1401.9 1867.8 1401.9C1879.1 1401.9 1890.4 1401.9 1901.6 1401.9" fill="none" stroke="#8ab8ff" stroke-width="2" stroke-linejoin="round" stroke-linecap="butt"/>
<path d="M1913.4 1260.3C1914.2 1229.6 1915.0 1168.1 1915.8 1168.1C1916.7 1168.1 1917.6 1175.4 1918.5 1175.9C1919.6 1176.5 1920.8 1176.4 1921.9 1176.9C1923.0 1177.4 1924.1 1177.7 1925.3 1179.3C1926.2 1180.5 1927.1 1241.9 1928.0 1265.4C1929.0 1291.9 1930.0 1332.3 1931.0 1332.3C1931.9 1332.3 1932.8 1201.9 1933.7 1201.9C1934.6 1201.9 1935.5 1204.4 1936.4 1208.0C1937.5 1212.4 1938.7 1277.2 1939.8 1278.9C1940.9 1280.7 1942.0 1281.6 1943.2 1281.6C1944.0 1281.6 1944.8 1224.2 1945.5 1224.2C1946.7 1224.2 1947.8 1225.0 1948.9 1226.6C1949.8 1227.8 1950.7 1285.4 1951.6 1287.4C1953.0 1290.3 1954.3 1290.6 1955.7 1291.8C1956.8 1292.7 1957.9 1293.8 1959.1 1294.1C1960.2 1294.5 1961.3 1294.8 1962.4 1294.8C1963.2 1294.8 1964.0 1241.8 1964.8 1241.8C1965.9 1241.8 1967.0 1348.2 1968.2 1348.2C1969.2 1348.2 1970.2 1294.8 1971.2 1294.8C1972.0 1294.8 1972.8 1295.8 1973.6 1295.8C1974.6 1295.8 1975.6 1244.1 1976.6 1244.1C1977.7 1244.1 1978.9 1349.2 1980.0 1349.2C1981.0 1349.2 1982.0 1314.3 1983.0 1295.8C1983.9 1279.4 1984.8 1244.5 1985.7 1244.5C1987.0 1244.5 1988.2 1299.2 1989.5 1299.2C1990.4 1299.2 1991.3 1253.6 1992.2 1253.6C1993.2 1253.6 1994.2 1257.9 1995.2 1259.7C1996.1 1261.2 1997.0 1261.2 1997.9 1263.7C1999.0 1266.8 2000.2 1356.6 2001.3 1356.6C2002.2 1356.6 2003.1 1267.8 2004.0 1267.8C2005.0 1267.8 2006.0 1267.8 2007.0 1267.8C2008.2 1267.8 2009.3 1311.7 2010.4 1311.7C2011.4 1311.7 2012.4 1267.1 2013.4 1267.1C2014.5 1267.1 2015.5 1312.0 2016.5 1312.0C2017.6 1312.0 2018.7 1311.7 2019.9 1311.0C2021.0 1310.4 2022.1 1264.5 2023.2 1262.0C2024.1 1260.0 2025.0 1258.6 2025.9 1258.6C2027.1 1258.6 2028.2 1304.8 2029.3 1305.3C2030.3 1305.7 2031.4 1305.9 2032.4 1305.9C2033.3 1305.9 2034.2 1257.9 2035.1 1257.0C2036.2 1255.8 2037.3 1255.3 2038.4 1255.3C2039.2 1255.3 2040.0 1303.6 2040.8 1303.6C2041.9 1303.6 2043.1 1254.9 2044.2 1253.6C2045.1 1252.5 2046.0 1252.8 2046.9 1251.9C2047.8 1251.0 2048.7 1247.4 2049.6 1246.1C2050.7 1244.6 2051.8 1242.8 2053.0 1242.8C2054.0 1242.8 2055.0 1292.4 2056.0 1292.4C2057.0 1292.4 2058.0 1235.7 2059.1 1235.7C2060.1 1235.7 2061.1 1289.1 2062.1 1289.1C2063.2 1289.1 2064.3 1235.7 2065.5 1235.7C2066.6 1235.7 2067.7 1240.6 2068.9 1241.8C2070.0 1242.9 2071.1 1242.6 2072.2 1244.1C2073.2 1245.5 2074.3 1296.8 2075.3 1296.8C2076.3 1296.8 2077.3 1295.7 2078.3 1294.1C2079.4 1292.3 2080.6 1268.2 2081.7 1265.4C2082.7 1262.9 2083.7 1261.0 2084.7 1261.0C2085.6 1261.0 2086.5 1264.0 2087.4 1268.8C2088.2 1273.0 2089.0 1339.7 2089.8 1339.7C2090.5 1339.7 2091.1 1225.9 2091.8 1225.9C2092.8 1225.9 2093.9 1242.8 2094.9 1242.8C2095.8 1242.8 2096.7 1231.6 2097.6 1231.6C2098.7 1231.6 2099.8 1289.1 2100.9 1289.1C2101.8 1289.1 2102.7 1238.4 2103.6 1238.4C2104.7 1238.4 2105.7 1251.5 2106.7 1251.9C2107.7 1252.3 2108.7 1252.1 2109.7 1252.6C2110.7 1253.0 2111.8 1305.9 2112.8 1305.9C2113.7 1305.9 2114.6 1265.4 2115.5 1265.4C2116.6 1265.4 2117.7 1316.1 2118.9 1316.1C2119.9 1316.1 2120.9 1277.2 2121.9 1277.2C2122.8 1277.2 2123.7 1277.9 2124.6 1278.9C2125.7 1280.2 2126.8 1322.8 2128.0 1322.8C2129.1 1322.8 2130.2 1287.4 2131.4 1287.4C2132.5 1287.4 2133.6 1289.5 2134.7 1290.7C2136.1 1292.2 2137.4 1294.5 2138.8 1295.8C2140.2 1297.2 2141.7 1297.8 2143.2 1299.2C2144.5 1300.5 2145.9 1301.0 2147.2 1304.3C2148.1 1306.4 2149.0 1337.5 2149.9 1338.0C2151.1 1338.7 2152.2 1339.1 2153.3 1339.1C2154.2 1339.1 2155.1 1307.6 2156.0 1307.6C2157.0 1307.6 2158.0 1339.2 2159.1 1339.7C2161.4 1341.0 2163.8 1341.4 2166.1 1341.4C2167.4 1341.4 2168.6 1314.4 2169.9 1314.4C2170.9 1314.4 2171.9 1344.1 2172.9 1345.5C2174.3 1347.2 2175.6 1347.5 2177.0 1348.2C2177.5 1348.4 2178.0 1348.9 2178.6 1348.9C2179.5 1348.9 2180.4 1322.2 2181.3 1322.2C2182.6 1322.2 2184.0 1322.8 2185.3 1322.8C2186.2 1322.8 2187.1 1322.8 2188.0 1322.8C2189.1 1322.8 2190.1 1348.9 2191.1 1348.9C2192.2 1348.9 2193.3 1348.6 2194.5 1348.2C2195.4 1347.8 2196.3 1323.0 2197.2 1321.8C2198.3 1320.3 2199.4 1319.5 2200.5 1319.5C2201.7 1319.5 2202.8 1320.5 2203.9 1320.5C2205.6 1320.5 2207.3 1320.5 2209.0 1320.5C2210.0 1320.5 2211.0 1347.5 2212.0 1347.5C2212.9 1347.5 2213.8 1319.5 2214.7 1319.5C2215.9 1319.5 2217.0 1319.8 2218.1 1320.1C2219.2 1320.5 2220.4 1321.7 2221.5 1322.8C2222.7 1324.1 2224.0 1325.0 2225.2 1327.9C2226.3 1330.6 2227.5 1355.2 2228.6 1356.6C2229.4 1357.6 2230.2 1358.3 2230.9 1358.3C2231.8 1358.3 2232.7 1341.4 2233.6 1341.4C2234.8 1341.4 2235.9 1343.4 2237.0 1346.5C2238.0 1349.2 2239.1 1383.6 2240.1 1383.6C2241.1 1383.6 2242.1 1350.9 2243.1 1350.9C2245.1 1350.9 2247.2 1352.2 2249.2 1354.9C2250.2 1356.3 2251.2 1372.1 2252.2 1376.9C2253.2 1381.7 2254.3 1387.7 2255.3 1387.7C2256.2 1387.7 2257.1 1361.0 2258.0 1361.0C2261.1 1361.0 2264.3 1361.8 2267.4 1364.1C2268.3 1364.7 2269.2 1377.6 2270.1 1377.6C2271.1 1377.6 2272.2 1365.7 2273.2 1365.7C2274.4 1365.7 2275.7 1366.1 2276.9 1366.8C2277.9 1367.3 2278.9 1378.6 2279.9 1378.6C2280.8 1378.6 2281.7 1368.4 2282.6 1368.4C2283.8 1368.4 2284.9 1368.4 2286.0 1368.4C2287.0 1368.4 2288.0 1391.1 2289.1 1391.1C2290.0 1391.1 2290.9 1370.1 2291.8 1370.1C2292.7 1370.1 2293.6 1381.4 2294.5 1382.0C2295.6 1382.6 2296.7 1383.0 2297.8 1383.0C2298.6 1383.0 2299.4 1373.5 2300.2 1373.5C2301.1 1373.5 2302.0 1374.3 2302.9 1375.2C2304.0 1376.3 2305.2 1385.3 2306.3 1385.3C2307.3 1385.3 2308.3 1380.3 2309.3 1380.3C2310.8 1380.3 2312.3 1382.2 2313.7 1383.0C2315.1 1383.6 2316.4 1383.6 2317.8 1384.7C2318.9 1385.5 2320.0 1396.9 2321.1 1397.2C2323.2 1397.6 2325.2 1397.4 2327.2 1397.8C2328.1 1398.0 2329.0 1401.9 2329.9 1401.9C2419.7 1401.9 2509.4 1401.9 2599.2 1401.9" fill="none" stroke="#8ab8ff" stroke-width="2" stroke-linejoin="round" stroke-linecap="butt"/>
<path d="M92.48 367.56A76.25 76.25 0 1 1 237.52 367.56" stroke="#22252b" stroke-width="26.50" fill="none"/>
<path d="M75.13 373.20A94.50 94.50 0 0 1 73.94 318.75" stroke="#c4162a" stroke-width="3.2" fill="none"/>
<path d="M73.94 318.75A94.50 94.50 0 1 1 254.87 373.20" stroke="#73bf69" stroke-width="3.2" fill="none"/>
<path d="M92.48 670.56A76.25 76.25 0 1 1 237.52 670.56" stroke="#22252b" stroke-width="26.50" fill="none"/>
<path d="M75.13 676.20A94.50 94.50 0 1 1 258.80 635.48" stroke="#c4162a" stroke-width="3.2" fill="none"/>
<path d="M258.80 635.48A94.50 94.50 0 0 1 254.87 676.20" stroke="#73bf69" stroke-width="3.2" fill="none"/>
<path d="M73.89 1220.90A95.80 95.80 0 1 1 256.11 1220.90" stroke="#22252b" stroke-width="52.40" fill="none"/>
<path d="M42.69 1231.04A128.60 128.60 0 0 1 36.40 1191.30" stroke="#c4162a" stroke-width="8.6" fill="none"/>
<path d="M36.40 1191.30A128.60 128.60 0 1 1 287.31 1231.04" stroke="#73bf69" stroke-width="8.6" fill="none"/>
<rect x="366.8" y="707.9" width="28.5" height="8" rx="4" fill="#a352cc"/>
<rect x="2237.5" y="707.9" width="28.5" height="8" rx="4" fill="#73bf69"/>
<rect x="366.7" y="1468" width="28.5" height="8" rx="4" fill="#73bf69"/>
<rect x="767.8" y="1468" width="28.5" height="8" rx="4" fill="#f2cc0c"/>
<rect x="1174" y="1468" width="28.5" height="8" rx="4" fill="#8ab8ff"/></svg>
<svg width="2565" height="1922" viewBox="0 0 2565 1922"><rect x="0" y="0" width="2565" height="111.5" fill="#33373b"/>
<rect x="0" y="111.5" width="2565" height="1.5" fill="#050608"/>
<rect x="0" y="113" width="2565" height="157.5" fill="#181b1f"/>
<rect x="0" y="189.7" width="2565" height="2" fill="#2a2c32"/>
<rect x="0" y="269.7" width="2565" height="2" fill="#2a2c32"/>
<rect x="331" y="19.8" width="2016" height="72.4" rx="36.2" fill="#5f6368"/>
<path d="M55.3 55.7H17.2M33 39.8L17 55.7L33 71.8" stroke="#e8eaed" stroke-width="5.4" fill="none" stroke-linecap="round" stroke-linejoin="round" />
<path d="M127.2 55.7H165.3M149.8 39.8L165.6 55.7L149.8 71.8" stroke="#808387" stroke-width="5.4" fill="none" stroke-linecap="round" stroke-linejoin="round" />
<path d="M275.14 48.81A20.0 20.0 0 1 0 266.90 73.44" stroke="#e8eaed" stroke-width="5.4" fill="none" stroke-linecap="round" stroke-linejoin="round" />
<path d="M276.9 36.2V49H263.8" stroke="#e8eaed" stroke-width="5.2" fill="none" stroke-linecap="round" stroke-linejoin="round" />
<path d="M1194.1 48.2L1185.6 63H1202.6Z" fill="#fff" stroke="#fff" stroke-width="4" stroke-linejoin="round"/>
<rect x="1193" y="51.5" width="2.3" height="7" rx="1" fill="#5f6368"/><circle cx="1194.15" cy="61.3" r="1.35" fill="#5f6368"/>
<rect x="2302.8" y="37.8" width="10.9" height="23.2" rx="5.45" fill="none" stroke="#dcdee1" stroke-width="3"/>
<path d="M2296.3 51.8V54.2A12.1 12.1 0 0 0 2320.5 54.2V51.8" stroke="#dcdee1" stroke-width="3" fill="none" stroke-linecap="round" stroke-linejoin="round" />
<path d="M2308.4 66.3V73.6M2300.1 73.6H2316.6" stroke="#dcdee1" stroke-width="3" fill="none" stroke-linecap="round" stroke-linejoin="round" />
<path d="M2412.3 49.4H2407.7a6.2 6.2 0 0 0 -6.2 6.2V76.5a6.2 6.2 0 0 0 6.2 6.2H2432.7a6.2 6.2 0 0 0 6.2 -6.2V55.6a6.2 6.2 0 0 0 -6.2 -6.2H2428.1" stroke="#e8eaed" stroke-width="5" fill="none" stroke-linecap="butt" stroke-linejoin="round" />
<path d="M2420.2 64V34.6M2411.3 43L2420.2 34.2L2429.1 43" stroke="#e8eaed" stroke-width="5" fill="none" stroke-linecap="round" stroke-linejoin="round" />
<rect x="2508.6" y="34" width="43" height="43.6" rx="12.5" fill="none" stroke="#e8eaed" stroke-width="5"/>
<defs><linearGradient id="gl" gradientUnits="userSpaceOnUse" x1="0" y1="175" x2="0" y2="127"><stop offset="0" stop-color="#fdd20a"/><stop offset="0.5" stop-color="#f78d1e"/><stop offset="1" stop-color="#f05a28"/></linearGradient></defs><path d="M30.88 127.08L35.14 131.94L45.54 132.06L46.33 136.80L49.32 142.70L51.16 149.87L50.28 153.86L49.64 157.84L50.60 161.82L44.54 165.81L39.28 174.57L33.07 171.39L25.90 171.07L18.01 173.06L17.53 165.33L7.09 156.25L13.63 145.89L11.95 135.37L26.49 132.74Z" fill="url(#gl)" stroke="url(#gl)" stroke-width="0.9" stroke-linejoin="round"/><path d="M50.68 149.87C50.25 149.14 49.88 146.88 49.20 145.49C48.53 144.10 47.78 142.67 46.61 141.51C45.45 140.34 43.76 139.25 42.23 138.52C40.70 137.79 39.18 137.36 37.45 137.12C35.72 136.89 33.73 136.79 31.87 137.12C30.01 137.46 27.89 138.12 26.29 139.12C24.70 140.11 23.37 141.57 22.31 143.10C21.25 144.63 20.40 146.49 19.92 148.28C19.44 150.07 19.24 152.06 19.44 153.86C19.64 155.65 20.24 157.58 21.12 159.04C21.99 160.50 23.31 161.66 24.70 162.62C26.10 163.58 27.89 164.38 29.48 164.81C31.08 165.24 32.74 165.31 34.26 165.21C35.79 165.11 37.38 164.78 38.65 164.22C39.91 163.65 41.07 162.82 41.83 161.82C42.60 160.83 43.21 159.57 43.23 158.24C43.24 156.91 42.21 155.05 41.91 153.86C41.61 152.66 41.85 151.93 41.43 151.07C41.02 150.20 40.37 149.24 39.44 148.68C38.51 148.11 37.05 147.68 35.86 147.68C34.66 147.68 33.27 147.98 32.27 148.68C31.27 149.37 30.31 150.80 29.88 151.86C29.45 152.93 29.42 154.06 29.68 155.05C29.95 156.05 30.64 157.23 31.47 157.84C32.30 158.45 33.70 158.66 34.66 158.72C35.62 158.77 37.18 157.85 37.25 158.16C37.32 158.46 36.09 160.20 35.06 160.55C34.03 160.90 32.27 160.68 31.08 160.23C29.88 159.78 28.72 158.90 27.89 157.84C27.06 156.78 26.33 155.25 26.10 153.86C25.86 152.46 26.00 150.80 26.49 149.47C26.99 148.15 27.99 146.78 29.08 145.89C30.18 144.99 31.61 144.36 33.07 144.10C34.53 143.83 36.32 143.93 37.85 144.29C39.38 144.66 40.97 145.42 42.23 146.29C43.49 147.15 44.59 148.35 45.42 149.47C46.25 150.60 46.84 151.93 47.21 153.06C47.58 154.19 47.52 155.38 47.65 156.25C47.78 157.11 47.32 157.91 48.01 158.24C48.70 158.57 51.10 158.97 51.79 158.24C52.49 157.51 52.19 155.25 52.19 153.86C52.19 152.46 52.05 150.54 51.79 149.87C51.54 149.21 51.11 150.60 50.68 149.87Z" fill="#181b1f"/>
<rect x="1016.8" y="120.3" width="661" height="61.2" rx="4.5" fill="#111217" stroke="#42444d" stroke-width="2"/>
<circle cx="1045.7" cy="150.7" r="10.6" fill="none" stroke="#8e8e9b" stroke-width="3"/>
<path d="M1053.6 158.7L1059.6 164.8" stroke="#8e8e9b" stroke-width="3" fill="none" stroke-linecap="round" stroke-linejoin="round" />
<rect x="1545.3" y="144.2" width="27" height="15.4" rx="3" fill="none" stroke="#8e8e9b" stroke-width="2.6"/>
<path d="M1550.3 149.2h1.2M1554.8 149.2h1.2M1559.3 149.2h1.2M1563.8 149.2h1.2M1567 149.2h0.6M1550.3 154.6h1M1554.6 154.6H1563.2M1566.4 154.6h1.2" stroke="#8e8e9b" stroke-width="2.2" fill="none" stroke-linecap="round" stroke-linejoin="round" />
<path d="M2372.6 152.2H2393.6M2383.1 141.7V162.7" stroke="#8e8e9b" stroke-width="3" fill="none" stroke-linecap="round" stroke-linejoin="round" />
<path d="M2411.4 149.2L2417 155.0L2422.6 149.2" stroke="#8e8e9b" stroke-width="3" fill="none" stroke-linecap="round" stroke-linejoin="round" />
<rect x="2459" y="127" width="2" height="48" fill="#2e3036"/>
<circle cx="2505" cy="152" r="13.5" fill="none" stroke="#8e8e9b" stroke-width="3"/>
<path d="M2500.9 148.6a4.1 4.1 0 1 1 5.6 3.8c-1 .5 -1.5 1.2 -1.5 2.4" stroke="#8e8e9b" stroke-width="2.8" fill="none" stroke-linecap="round" stroke-linejoin="round" />
<circle cx="2505" cy="159.3" r="1.8" fill="#8e8e9b"/>
<path d="M11 222H47M11 231.8H47M11 241.6H47" stroke="#ccccdc" stroke-width="4" fill="none" stroke-linecap="round" stroke-linejoin="round" />
<path d="M185.9 227.3L192.29999999999998 233.5L185.9 239.7" stroke="#8e8e9b" stroke-width="3" fill="none" stroke-linecap="round" stroke-linejoin="round" />
<path d="M396.0 227.3L402.4 233.5L396.0 239.7" stroke="#8e8e9b" stroke-width="3" fill="none" stroke-linecap="round" stroke-linejoin="round" />
<path d="M646.65 219.60L651.00 228.21L660.54 229.69L653.69 236.49L655.23 246.01L646.65 241.60L638.07 246.01L639.61 236.49L632.76 229.69L642.30 228.21Z" fill="#eb7b18" stroke="#eb7b18" stroke-width="3.4" stroke-linejoin="round"/>
<path d="M1048.3 224.5a4.5 4.5 0 0 1 4.5 -4.5H1066.3L1073.5 227.2V239.4a4.5 4.5 0 0 1 -4.5 4.5H1052.8a4.5 4.5 0 0 1 -4.5 -4.5Z" stroke="#8e8e9b" stroke-width="3" fill="none" stroke-linecap="round" stroke-linejoin="round" />
<path d="M1054.5 243.5V235.6H1067.3V243.5M1055 220.5V226.6H1063.5V220.5" stroke="#8e8e9b" stroke-width="3" fill="none" stroke-linecap="round" stroke-linejoin="round" />
<path d="M1146.22 218.63L1151.18 218.63L1151.25 222.12L1153.88 223.21L1156.40 220.79L1159.91 224.30L1157.49 226.82L1158.58 229.45L1162.07 229.52L1162.07 234.48L1158.58 234.55L1157.49 237.18L1159.91 239.70L1156.40 243.21L1153.88 240.79L1151.25 241.88L1151.18 245.37L1146.22 245.37L1146.15 241.88L1143.52 240.79L1141.00 243.21L1137.49 239.70L1139.91 237.18L1138.82 234.55L1135.33 234.48L1135.33 229.52L1138.82 229.45L1139.91 226.82L1137.49 224.30L1141.00 220.79L1143.52 223.21L1146.15 222.12Z" fill="none" stroke="#8e8e9b" stroke-width="3" stroke-linejoin="round"/><circle cx="1148.7" cy="232" r="4.6" fill="none" stroke="#8e8e9b" stroke-width="3"/>
<rect x="1202" y="208" width="113" height="45.6" rx="4" fill="none" stroke="#53555c" stroke-width="2"/>
<path d="M1277 229.1L1283 235.29999999999998L1289 229.1" stroke="#ccccdc" stroke-width="3" fill="none" stroke-linecap="round" stroke-linejoin="round" />
<rect x="1332" y="207" width="100.2" height="47.6" rx="4" fill="#3d71d9"/>
<rect x="1448" y="207" width="2" height="47.6" fill="#34363c"/>
<path d="M1498.5 225.8L1492.1 232L1498.5 238.2" stroke="#8e8e9b" stroke-width="3" fill="none" stroke-linecap="round" stroke-linejoin="round" />
<circle cx="1557" cy="232" r="13.5" fill="none" stroke="#8e8e9b" stroke-width="3"/>
<path d="M1557.4 223.8V233H1549.6" stroke="#8e8e9b" stroke-width="3" fill="none" stroke-linecap="round" stroke-linejoin="round" />
<path d="M2269.5 229.5L2275.1 235.3L2280.7 229.5" stroke="#8e8e9b" stroke-width="3" fill="none" stroke-linecap="round" stroke-linejoin="round" />
<path d="M2331.8 225.8L2338.2 232L2331.8 238.2" stroke="#8e8e9b" stroke-width="3" fill="none" stroke-linecap="round" stroke-linejoin="round" />
<circle cx="2395.2" cy="230.4" r="11.6" fill="none" stroke="#8e8e9b" stroke-width="3"/>
<path d="M2403.8 239.2L2410.2 245.6M2389.6 230.4H2401" stroke="#8e8e9b" stroke-width="3" fill="none" stroke-linecap="round" stroke-linejoin="round" />
<path d="M2472.8 226.3A13.5 13.5 0 0 1 2498.5 232.7" stroke="#8e8e9b" stroke-width="3" fill="none" stroke-linecap="round" stroke-linejoin="round" />
<path d="M2497.2 237.7A13.5 13.5 0 0 1 2471.5 231.3" stroke="#8e8e9b" stroke-width="3" fill="none" stroke-linecap="round" stroke-linejoin="round" />
<path d="M2472.5 218V226.3H2480.6" stroke="#8e8e9b" stroke-width="3" fill="none" stroke-linecap="round" stroke-linejoin="round" />
<path d="M2497.6 246V238.2H2489.5" stroke="#8e8e9b" stroke-width="3" fill="none" stroke-linecap="round" stroke-linejoin="round" />
<path d="M2547.4 229.5L2553 235.3L2558.6 229.5" stroke="#8e8e9b" stroke-width="3" fill="none" stroke-linecap="round" stroke-linejoin="round" /></svg>
<div id="tx"><span class="t" style="left:1210.47px;top:33.87px;font-size:35.5px;color:#ffffff;transform:scaleX(0.9646);-webkit-text-stroke:0.20px #ffffff;">192.168.0.33:3000</span>
<span class="t" style="left:2524.50px;top:44.69px;font-size:23px;color:#e8eaed;font-weight:700;">6</span>
<span class="t" style="left:1073.62px;top:135.26px;font-size:28px;color:#9a9aa8;transform:scaleX(1.0822);-webkit-text-stroke:0.20px #9a9aa8;">Search or jump to...</span>
<span class="t" style="left:1582.81px;top:137.18px;font-size:24px;color:#9a9aa8;transform:scaleX(1.0861);-webkit-text-stroke:0.20px #9a9aa8;">cmd+k</span>
<span class="t" style="left:83.85px;top:215.26px;font-size:28px;color:#ccccdc;transform:scaleX(1.0760);-webkit-text-stroke:0.20px #ccccdc;">Home</span>
<span class="t" style="left:212.04px;top:215.26px;font-size:28px;color:#ccccdc;transform:scaleX(1.0779);-webkit-text-stroke:0.20px #ccccdc;">Dashboards</span>
<span class="t" style="left:422.04px;top:215.26px;font-size:28px;color:#9a9aa8;transform:scaleX(0.9778);-webkit-text-stroke:0.20px #9a9aa8;">Huawei_CK_1</span>
<span class="t" style="left:1217.70px;top:217.28px;font-size:24px;color:#ccccdc;transform:scaleX(1.0881);-webkit-text-stroke:0.40px #ccccdc;">Add</span>
<span class="t" style="left:1347.65px;top:217.28px;font-size:24px;color:#ffffff;transform:scaleX(1.0495);-webkit-text-stroke:0.40px #ffffff;">Share</span>
<span class="t" style="left:1590.65px;top:215.96px;font-size:28px;color:#9a9aa8;transform:scaleX(1.1546);-webkit-text-stroke:0.20px #9a9aa8;">2024-05-23 00:00:00 to 2024-05-23 23:59:59</span>
<span class="t" style="left:122.95px;top:337.38px;font-size:24px;color:#c4162a;transform:scaleX(1.1011);-webkit-text-stroke:0.20px #c4162a;">0.00 W</span>
<span class="t" style="left:78.32px;top:380.86px;font-size:28px;color:#ccccdc;transform:scaleX(1.0912);-webkit-text-stroke:0.20px #ccccdc;">Leistung Ost</span>
<span class="t" style="left:22.93px;top:479.16px;font-size:28px;color:#ccccdc;transform:scaleX(1.0738);-webkit-text-stroke:0.40px #ccccdc;">Spannung Ost</span>
<span class="t" style="left:123.50px;top:640.18px;font-size:24px;color:#c4162a;transform:scaleX(1.1963);-webkit-text-stroke:0.20px #c4162a;">0.00 V</span>
<span class="t" style="left:68.02px;top:684.66px;font-size:28px;color:#ccccdc;transform:scaleX(1.0761);-webkit-text-stroke:0.20px #ccccdc;">Spannung Ost</span>
<span class="t" style="left:23.00px;top:782.66px;font-size:28px;color:#ccccdc;transform:scaleX(1.1002);-webkit-text-stroke:0.40px #ccccdc;">Gesamtleistung</span>
<span class="t" style="left:358.33px;top:782.66px;font-size:28px;color:#ccccdc;transform:scaleX(1.0859);-webkit-text-stroke:0.40px #ccccdc;">Leistung PV - Gesamt - String 1 West - String 2 Ost</span>
<span class="t" style="left:109.26px;top:1184.35px;font-size:30px;color:#c4162a;transform:scaleX(1.1359);-webkit-text-stroke:0.20px #c4162a;">0.00 W</span>
<span class="t" style="left:58.35px;top:1286.26px;font-size:28px;color:#ccccdc;transform:scaleX(1.0955);-webkit-text-stroke:0.20px #ccccdc;">Gesamtleistung</span>
<span class="t" style="left:22.38px;top:1542.66px;font-size:28px;color:#ccccdc;transform:scaleX(1.1100);-webkit-text-stroke:0.40px #ccccdc;">Bezug/Tag</span>
<span class="t" style="left:381.50px;top:628.38px;font-size:24px;color:#ccccdc;transform:scaleX(1.0345);-webkit-text-stroke:0.20px #ccccdc;">0 W</span>
<span class="t" style="left:372.53px;top:563.88px;font-size:24px;color:#ccccdc;transform:scaleX(0.9719);-webkit-text-stroke:0.20px #ccccdc;">1 kW</span>
<span class="t" style="left:368.96px;top:499.38px;font-size:24px;color:#ccccdc;transform:scaleX(1.0367);-webkit-text-stroke:0.20px #ccccdc;">2 kW</span>
<span class="t" style="left:370.00px;top:434.88px;font-size:24px;color:#ccccdc;transform:scaleX(1.0179);-webkit-text-stroke:0.20px #ccccdc;">3 kW</span>
<span class="t" style="left:370.00px;top:370.38px;font-size:24px;color:#ccccdc;transform:scaleX(1.0179);-webkit-text-stroke:0.20px #ccccdc;">4 kW</span>
<span class="t" style="left:370.00px;top:305.88px;font-size:24px;color:#ccccdc;transform:scaleX(1.0179);-webkit-text-stroke:0.20px #ccccdc;">5 kW</span>
<span class="t" style="left:405.00px;top:661.78px;font-size:24px;color:#ccccdc;transform:scaleX(1.0886);-webkit-text-stroke:0.20px #ccccdc;">00:00</span>
<span class="t" style="left:582.50px;top:661.78px;font-size:24px;color:#ccccdc;transform:scaleX(1.0886);-webkit-text-stroke:0.20px #ccccdc;">02:00</span>
<span class="t" style="left:760.00px;top:661.78px;font-size:24px;color:#ccccdc;transform:scaleX(1.0886);-webkit-text-stroke:0.20px #ccccdc;">04:00</span>
<span class="t" style="left:937.50px;top:661.78px;font-size:24px;color:#ccccdc;transform:scaleX(1.0886);-webkit-text-stroke:0.20px #ccccdc;">06:00</span>
<span class="t" style="left:1115.00px;top:661.78px;font-size:24px;color:#ccccdc;transform:scaleX(1.0886);-webkit-text-stroke:0.20px #ccccdc;">08:00</span>
<span class="t" style="left:1293.56px;top:661.78px;font-size:24px;color:#ccccdc;transform:scaleX(1.0356);-webkit-text-stroke:0.20px #ccccdc;">10:00</span>
<span class="t" style="left:1471.06px;top:661.78px;font-size:24px;color:#ccccdc;transform:scaleX(1.0356);-webkit-text-stroke:0.20px #ccccdc;">12:00</span>
<span class="t" style="left:1648.56px;top:661.78px;font-size:24px;color:#ccccdc;transform:scaleX(1.0356);-webkit-text-stroke:0.20px #ccccdc;">14:00</span>
<span class="t" style="left:1826.06px;top:661.78px;font-size:24px;color:#ccccdc;transform:scaleX(1.0356);-webkit-text-stroke:0.20px #ccccdc;">16:00</span>
<span class="t" style="left:2003.56px;top:661.78px;font-size:24px;color:#ccccdc;transform:scaleX(1.0356);-webkit-text-stroke:0.20px #ccccdc;">18:00</span>
<span class="t" style="left:2178.89px;top:661.78px;font-size:24px;color:#ccccdc;transform:scaleX(1.1071);-webkit-text-stroke:0.20px #ccccdc;">20:00</span>
<span class="t" style="left:2356.39px;top:661.78px;font-size:24px;color:#ccccdc;transform:scaleX(1.1071);-webkit-text-stroke:0.20px #ccccdc;">22:00</span>
<span class="t" style="left:410.91px;top:697.98px;font-size:24px;color:#ccccdc;transform:scaleX(1.0930);-webkit-text-stroke:0.20px #ccccdc;">String 2 Leistung</span>
<span class="t" style="left:623.72px;top:697.98px;font-size:24px;color:#ccccdc;transform:scaleX(1.0846);-webkit-text-stroke:0.20px #ccccdc;">Last *: 0 W</span>
<span class="t" style="left:2281.92px;top:697.98px;font-size:24px;color:#ccccdc;transform:scaleX(1.0821);-webkit-text-stroke:0.20px #ccccdc;">String 2 Spannung</span>
<span class="t" style="left:2512.17px;top:697.98px;font-size:24px;color:#ccccdc;transform:scaleX(1.1301);-webkit-text-stroke:0.20px #ccccdc;">Last *: 0 V</span>
<span class="t" style="left:381.50px;top:1388.88px;font-size:24px;color:#ccccdc;transform:scaleX(1.0345);-webkit-text-stroke:0.20px #ccccdc;">0 W</span>
<span class="t" style="left:372.53px;top:1307.13px;font-size:24px;color:#ccccdc;transform:scaleX(0.9719);-webkit-text-stroke:0.20px #ccccdc;">1 kW</span>
<span class="t" style="left:368.45px;top:1225.38px;font-size:24px;color:#ccccdc;transform:scaleX(1.0460);-webkit-text-stroke:0.20px #ccccdc;">2 kW</span>
<span class="t" style="left:369.50px;top:1143.63px;font-size:24px;color:#ccccdc;transform:scaleX(1.0270);-webkit-text-stroke:0.20px #ccccdc;">3 kW</span>
<span class="t" style="left:369.50px;top:1061.88px;font-size:24px;color:#ccccdc;transform:scaleX(1.0270);-webkit-text-stroke:0.20px #ccccdc;">4 kW</span>
<span class="t" style="left:369.50px;top:980.13px;font-size:24px;color:#ccccdc;transform:scaleX(1.0270);-webkit-text-stroke:0.20px #ccccdc;">5 kW</span>
<span class="t" style="left:368.45px;top:898.38px;font-size:24px;color:#ccccdc;transform:scaleX(1.0460);-webkit-text-stroke:0.20px #ccccdc;">6 kW</span>
<span class="t" style="left:405.10px;top:1422.38px;font-size:24px;color:#ccccdc;transform:scaleX(1.0886);-webkit-text-stroke:0.20px #ccccdc;">00:00</span>
<span class="t" style="left:588.60px;top:1422.38px;font-size:24px;color:#ccccdc;transform:scaleX(1.0886);-webkit-text-stroke:0.20px #ccccdc;">02:00</span>
<span class="t" style="left:772.10px;top:1422.38px;font-size:24px;color:#ccccdc;transform:scaleX(1.0886);-webkit-text-stroke:0.20px #ccccdc;">04:00</span>
<span class="t" style="left:955.60px;top:1422.38px;font-size:24px;color:#ccccdc;transform:scaleX(1.0886);-webkit-text-stroke:0.20px #ccccdc;">06:00</span>
<span class="t" style="left:1139.10px;top:1422.38px;font-size:24px;color:#ccccdc;transform:scaleX(1.0886);-webkit-text-stroke:0.20px #ccccdc;">08:00</span>
<span class="t" style="left:1323.66px;top:1422.38px;font-size:24px;color:#ccccdc;transform:scaleX(1.0356);-webkit-text-stroke:0.20px #ccccdc;">10:00</span>
<span class="t" style="left:1507.16px;top:1422.38px;font-size:24px;color:#ccccdc;transform:scaleX(1.0356);-webkit-text-stroke:0.20px #ccccdc;">12:00</span>
<span class="t" style="left:1690.66px;top:1422.38px;font-size:24px;color:#ccccdc;transform:scaleX(1.0356);-webkit-text-stroke:0.20px #ccccdc;">14:00</span>
<span class="t" style="left:1874.16px;top:1422.38px;font-size:24px;color:#ccccdc;transform:scaleX(1.0356);-webkit-text-stroke:0.20px #ccccdc;">16:00</span>
<span class="t" style="left:2057.66px;top:1422.38px;font-size:24px;color:#ccccdc;transform:scaleX(1.0356);-webkit-text-stroke:0.20px #ccccdc;">18:00</span>
<span class="t" style="left:2238.99px;top:1422.38px;font-size:24px;color:#ccccdc;transform:scaleX(1.1071);-webkit-text-stroke:0.20px #ccccdc;">20:00</span>
<span class="t" style="left:2422.49px;top:1422.38px;font-size:24px;color:#ccccdc;transform:scaleX(1.1071);-webkit-text-stroke:0.20px #ccccdc;">22:00</span>
<span class="t" style="left:52.44px;top:1645.38px;font-size:24px;color:#ccccdc;transform:scaleX(1.0552);-webkit-text-stroke:0.20px #ccccdc;">1.40 kWh</span>
<span class="t" style="left:52.44px;top:1717.38px;font-size:24px;color:#ccccdc;transform:scaleX(1.0552);-webkit-text-stroke:0.20px #ccccdc;">1.20 kWh</span>
<span class="t" style="left:52.44px;top:1789.38px;font-size:24px;color:#ccccdc;transform:scaleX(1.0552);-webkit-text-stroke:0.20px #ccccdc;">1.00 kWh</span>
<span class="t" style="left:32.41px;top:1861.38px;font-size:24px;color:#ccccdc;transform:scaleX(1.0947);-webkit-text-stroke:0.20px #ccccdc;">800.00 Wh</span>
<span class="t" style="left:411.23px;top:1457.98px;font-size:24px;color:#777784;transform:scaleX(1.0677);-webkit-text-stroke:0.20px #777784;">String 1 Leistung</span>
<span class="t" style="left:619.32px;top:1457.98px;font-size:24px;color:#777784;transform:scaleX(1.0769);-webkit-text-stroke:0.20px #777784;">Last *: 0 W</span>
<span class="t" style="left:811.10px;top:1457.98px;font-size:24px;color:#777784;transform:scaleX(1.0958);-webkit-text-stroke:0.20px #777784;">String 2 Leistung</span>
<span class="t" style="left:1024.22px;top:1457.98px;font-size:24px;color:#777784;transform:scaleX(1.0821);-webkit-text-stroke:0.20px #777784;">Last *: 0 W</span>
<span class="t" style="left:1217.54px;top:1457.98px;font-size:24px;color:#ccccdc;transform:scaleX(1.0622);-webkit-text-stroke:0.20px #ccccdc;">Gesamt PV Leistung</span>
<span class="t" style="left:1467.92px;top:1457.98px;font-size:24px;color:#ccccdc;transform:scaleX(1.0752);-webkit-text-stroke:0.20px #ccccdc;">Last *: 0 W</span></div>
<div class="r" style="left:994px;top:1896.3px;width:689.5px;height:10.8px;background:#ffffff;border-radius:5.4px;"></div>
</body></html>
